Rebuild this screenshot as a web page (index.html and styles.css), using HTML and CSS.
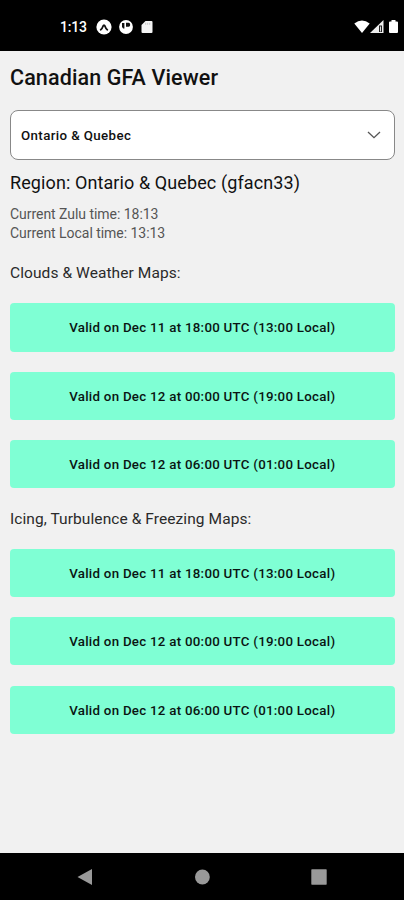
FILE: index.html
```html
<!DOCTYPE html>
<html lang="en">
    <head>
        <meta charset="UTF-8">
        <meta name="viewport" content="width=device-width, initial-scale=1.0">
        <title>Canadian GFA Viewer</title>
        <link rel="stylesheet" href="styles.css">
    </head>
    <body>
        <header class="statusbar">
            <span class="clock">1:13</span>
            <svg class="app-icon" width="16" height="16" viewBox="0 0 16 16">
                <circle cx="8" cy="8" r="7.6" fill="#fff"/>
                <path d="M4.7 10.8Q6 10 7 7.2Q8 5 9 7.2Q10 10 11.3 10.8" fill="none" stroke="#111" stroke-width="1.8" stroke-linecap="round"/>
            </svg>
            <svg class="app-icon" width="15" height="16" viewBox="0 0 15 16">
                <circle cx="7" cy="8" r="6.9" fill="#fff"/>
                <path d="M3 4h2.4v5.6H4.2L3 8zM7 3.8h2.6q1.6 0 1.6 2t-1.6 2H7z" fill="#111"/>
            </svg>
            <svg class="app-icon" width="12" height="14" viewBox="0 0 12 14">
                <path d="M4.5 1H10.5Q11.5 1 11.5 2V12Q11.5 13 10.5 13H1.5Q.5 13 .5 12V5Z" fill="#f4f4f4"/>
                <path d="M4.7 2.8v2M6.7 2.8v2M8.7 2.8v2" stroke="#bbb" stroke-width=".8"/>
            </svg>
            <div class="signals">
                <svg width="16" height="14" viewBox="0 0 16 14">
                    <path d="M.3 3.4Q8-2.4 15.7 3.4L8 13Z" fill="#fff"/>
                </svg>
                <svg width="14" height="14" viewBox="0 0 14 14">
                    <path d="M0 13L13.5 0V13Z" fill="#eee"/>
                    <path d="M9 5.5h3V12H9z" fill="#222"/>
                    <path d="M10.5 6.5v5" stroke="#ddd"/>
                </svg>
                <svg class="battery" width="9" height="14" viewBox="0 0 9 14">
                    <path d="M2.5 0h4v1.5H8Q9 1.5 9 2.5V12Q9 13 8 13H1Q0 13 0 12V2.5Q0 1.5 1 1.5H2.5Z" fill="#fff"/>
                </svg>
            </div>
        </header>

        <main class="content">
            <h1>Canadian GFA Viewer</h1>
            <div class="dropdown">
                <span>Ontario &amp; Quebec</span>
                <svg width="14" height="8" viewBox="0 0 14 8">
                    <path d="M1 1L7 6.7L13 1" fill="none" stroke="#555" stroke-width="1.3"/>
                </svg>
            </div>
            <h2>Region: Ontario &amp; Quebec (gfacn33)</h2>
            <div class="times">
                <p>Current Zulu time: 18:13</p>
                <p>Current Local time: 13:13</p>
            </div>

            <h3>Clouds &amp; Weather Maps:</h3>
            <div class="maps">
                <button>Valid on Dec 11 at 18:00 UTC (13:00 Local)</button>
                <button>Valid on Dec 12 at 00:00 UTC (19:00 Local)</button>
                <button>Valid on Dec 12 at 06:00 UTC (01:00 Local)</button>
            </div>

            <h3>Icing, Turbulence &amp; Freezing Maps:</h3>
            <div class="maps">
                <button>Valid on Dec 11 at 18:00 UTC (13:00 Local)</button>
                <button>Valid on Dec 12 at 00:00 UTC (19:00 Local)</button>
                <button>Valid on Dec 12 at 06:00 UTC (01:00 Local)</button>
            </div>
        </main>

        <nav class="navbar">
            <svg width="16" height="16" viewBox="0 0 16 16"><path d="M.5 8L15 0V16Z" fill="#999"/></svg>
            <svg width="16" height="16" viewBox="0 0 16 16"><circle cx="8.4" cy="8" r="7.4" fill="#999"/></svg>
            <svg width="16" height="16" viewBox="0 0 16 16"><rect x=".3" y=".3" width="15.4" height="15.4" rx=".6" fill="#999"/></svg>
        </nav>
    </body>
</html>
```

FILE: styles.css
```css
* {
    box-sizing: border-box;
}
body {
    font-family: Roboto, sans-serif;
    display: flex;
    flex-direction: column;
    height: 900px;
    margin: 0;
    background-color: #f1f1f1;
    color: #111;
}
h1, h2, h3, p {
    margin: 0;
    white-space: nowrap;
}
.statusbar {
    display: flex;
    align-items: center;
    height: 51px;
    padding: 2px 6px 0 60px;
    background-color: #000;
    color: #fff;
}
.clock {
    width: 36px;
    font-size: 14px;
    font-weight: 500;
    letter-spacing: -0.2px;
}
.app-icon {
    margin-right: 7px;
}
.signals {
    display: flex;
    margin-left: auto;
}
.battery {
    margin-left: 5px;
}
.content {
    flex: 1;
    padding: 0 9.5px 0 10px;
}
h1 {
    height: 59px;
    padding-top: 14px;
    font-size: 21.5px;
    line-height: 26px;
    font-weight: 500;
    letter-spacing: 0.12px;
}
.dropdown {
    display: flex;
    justify-content: space-between;
    align-items: center;
    height: 50px;
    padding: 0 13px 0 10px;
    background-color: white;
    border: 1px solid #888;
    border-radius: 8px;
    font-size: 13.3px;
    font-weight: 500;
    letter-spacing: 0.38px;
}
h2 {
    margin-top: 11px;
    font-size: 18px;
    line-height: 24px;
    font-weight: 400;
    letter-spacing: 0.1px;
}
.times {
    margin-top: 9.6px;
    font-size: 14px;
    line-height: 19px;
    letter-spacing: -0.04px;
    color: #555;
}
h3 {
    margin: 20.8px 0 20px;
    font-size: 15.5px;
    line-height: 20px;
    font-weight: 400;
    letter-spacing: 0.08px;
    color: #2a2a2a;
}
.maps {
    display: flex;
    flex-direction: column;
    gap: 20.1px;
}
button {
    height: 48.2px;
    padding: 1px 0 0;
    border: none;
    border-radius: 4px;
    background-color: aquamarine;
    color: #0a1512;
    font-family: inherit;
    font-size: 13.3px;
    font-weight: 500;
    letter-spacing: 0.27px;
}
.navbar {
    display: flex;
    justify-content: space-between;
    align-items: center;
    height: 47px;
    padding: 0 77px;
    background-color: #000;
}
```
